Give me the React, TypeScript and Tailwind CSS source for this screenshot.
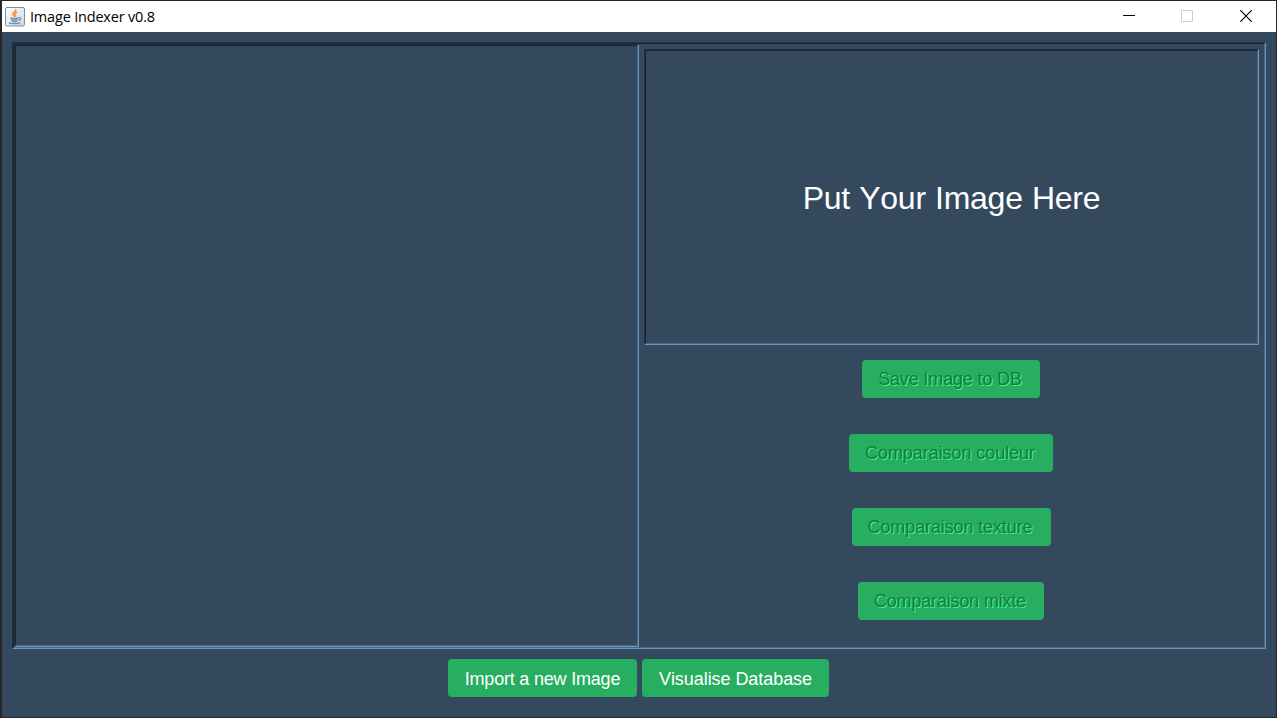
import type { ReactNode } from "react";

function Bevel({ className, children }: { className: string; children?: ReactNode }) {
  return (
    <div className={`flex shrink-0 border border-t-[#243342] border-l-[#243342] border-r-[#6994bf] border-b-[#6994bf] ${className}`}>
      <div className="flex min-w-0 flex-1 border border-t-[#19232e] border-l-[#19232e] border-r-[#4a6886] border-b-[#4a6886]">
        {children}
      </div>
    </div>
  );
}

function Button({ label, className, disabled = false }: { label: string; className: string; disabled?: boolean }) {
  return (
    <button
      disabled={disabled}
      className={`flex h-[38px] shrink-0 items-center justify-center rounded-[4px] bg-[#27ae60] text-[18px] leading-none whitespace-nowrap [font-kerning:none] ${
        disabled ? "pr-[2px] pb-px text-[#1b7943] [text-shadow:1px_1px_0_#37f889]" : "pt-px text-white"
      } ${className}`}
    >
      {label}
    </button>
  );
}

function JavaIcon() {
  return (
    <svg width="20" height="20" viewBox="0 0 20 20" fill="none">
      <defs>
        <linearGradient id="tile" x1="0" y1="0" x2="1" y2="1">
          <stop offset="0" stopColor="#ffffff" />
          <stop offset="1" stopColor="#cfd5db" />
        </linearGradient>
      </defs>
      <rect x="0.5" y="0.5" width="19" height="18.5" rx="1.5" fill="url(#tile)" stroke="#848d96" />
      <path d="M10.4 2.4c1.4 2-2.9 3-2.5 4.9.2 1 1.2 1.4 1.4 2.5M12.4 5c-2.6 1.2-3 2-2 3.1.5.6.4 1.2-.2 1.7" stroke="#eb9a55" strokeWidth="1.6" />
      <path d="M5.2 10.9c1.8.8 6.4.8 8.2 0M6 12.6c1.5.8 5.4.8 6.7 0M6.8 14.2c1.2.6 4 .6 5.2 0M4 15.5c1.3 1.7 9.6 1.5 11.2.1M13.5 10.7c2.7-.6 2.8 1.8.2 2.6" stroke="#6b92ae" strokeWidth="1.3" />
    </svg>
  );
}

function TitleBar() {
  return (
    <header className="flex h-[31px] shrink-0 items-center bg-white pl-[3px] text-black">
      <JavaIcon />
      <h1 className="ml-[5px] flex-1 font-['Open_Sans','Noto_Sans',sans-serif] text-[14.5px] leading-[20px] tracking-[-0.19px]">
        Image Indexer v0.8
      </h1>
      <div className="flex h-full pr-px pb-px">
        <button aria-label="Minimize" className="flex w-[58px] items-center justify-center">
          <svg width="12" height="12" shapeRendering="crispEdges"><path d="M0 5.5H12" stroke="#000" /></svg>
        </button>
        <button aria-label="Maximize" disabled className="flex w-[58px] items-center justify-center">
          <svg width="12" height="12" fill="none" shapeRendering="crispEdges"><path d="M.5.5h11v11H.5z" stroke="#ccc" /></svg>
        </button>
        <button aria-label="Close" className="flex w-[59px] items-center justify-center">
          <svg width="12" height="12"><path d="M.3.3l11.4 11.4M11.7.3L.3 11.7" stroke="#000" strokeWidth="1.15" /></svg>
        </button>
      </div>
    </header>
  );
}

export default function App() {
  return (
    <div className="flex h-[718px] w-[1277px] flex-col overflow-hidden border border-l-2 border-[#25272b] bg-[#34495e] font-['Liberation_Sans',Arial,sans-serif]">
      <TitleBar />
      <main className="flex flex-col items-center pt-[10px]">
        <Bevel className="h-[607px] w-[1254px]">
          <Bevel className="h-[603px] w-[625px]" />
          <section className="flex flex-1 flex-col items-center pt-[5px]">
            <Bevel className="h-[296px] w-[615px]">
              <p className="flex flex-1 items-center justify-center pt-px text-[32px] leading-none tracking-[-0.25px] text-white [font-kerning:none] [word-spacing:0.6px]">
                Put Your Image Here
              </p>
            </Bevel>
            <div className="mt-[15px] flex flex-col items-center gap-9 pr-px">
              <Button disabled label="Save Image to DB" className="w-[178px] tracking-[-0.15px]" />
              <Button disabled label="Comparaison couleur" className="w-[204px] tracking-[-0.06px]" />
              <Button disabled label="Comparaison texture" className="w-[199px] tracking-[-0.12px]" />
              <Button disabled label="Comparaison mixte" className="w-[186px] tracking-[-0.17px]" />
            </div>
          </section>
        </Bevel>
        <footer className="mt-[10px] flex gap-[5px] pr-px">
          <Button label="Import a new Image" className="w-[189px] tracking-[-0.2px]" />
          <Button label="Visualise Database" className="w-[187px] tracking-[-0.06px]" />
        </footer>
      </main>
    </div>
  );
}
